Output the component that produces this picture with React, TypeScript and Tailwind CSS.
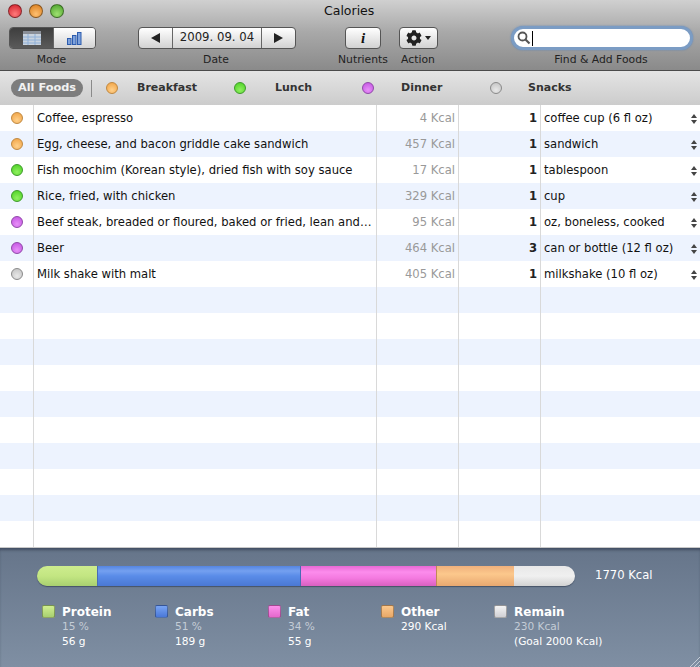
import { FaCog } from 'react-icons/fa'

const font = { fontFamily: '"DejaVu Sans", sans-serif' }

const dots: Record<string, string> = {
  orange: 'bg-[radial-gradient(circle_at_50%_70%,#ffd08a,#f0a040)] border-[#c08840]',
  green: 'bg-[radial-gradient(circle_at_50%_70%,#90f060,#48d020)] border-[#3d9a2a]',
  purple: 'bg-[radial-gradient(circle_at_50%_70%,#e890f8,#c050e0)] border-[#9048a8]',
  gray: 'bg-[radial-gradient(circle_at_50%_70%,#e8e8e8,#c0c0c0)] border-[#8a8a8a]',
}

const foods = [
  { dot: 'orange', name: 'Coffee, espresso', kcal: '4 Kcal', qty: '1', unit: 'coffee cup (6 fl oz)' },
  { dot: 'orange', name: 'Egg, cheese, and bacon griddle cake sandwich', kcal: '457 Kcal', qty: '1', unit: 'sandwich' },
  { dot: 'green', name: 'Fish moochim (Korean style), dried fish with soy sauce', kcal: '17 Kcal', qty: '1', unit: 'tablespoon' },
  { dot: 'green', name: 'Rice, fried, with chicken', kcal: '329 Kcal', qty: '1', unit: 'cup' },
  { dot: 'purple', name: 'Beef steak, breaded or floured, baked or fried, lean and…', kcal: '95 Kcal', qty: '1', unit: 'oz, boneless, cooked' },
  { dot: 'purple', name: 'Beer', kcal: '464 Kcal', qty: '3', unit: 'can or bottle (12 fl oz)' },
  { dot: 'gray', name: 'Milk shake with malt', kcal: '405 Kcal', qty: '1', unit: 'milkshake (10 fl oz)' },
]

const rows = Array.from({ length: 17 }, (_, i) => foods[i] ?? null)

const legend = [
  { title: 'Protein', a: '15 %', b: '56 g', w: 'w-[113px]', sw: 'bg-[linear-gradient(#d0ee90,#a8d070)]' },
  { title: 'Carbs', a: '51 %', b: '189 g', w: 'w-[113px]', sw: 'bg-[linear-gradient(#78a4f4,#4a78d8)]' },
  { title: 'Fat', a: '34 %', b: '55 g', w: 'w-[113px]', sw: 'bg-[linear-gradient(#fc90ec,#e468cc)]' },
  { title: 'Other', a: '290 Kcal', b: '', w: 'w-[113px]', sw: 'bg-[linear-gradient(#fcc88c,#e8a868)]' },
  { title: 'Remain', a: '230 Kcal', b: '(Goal 2000 Kcal)', w: 'w-[130px]', sw: 'bg-[linear-gradient(#f4f4f4,#d0d0d4)]' },
]

function Dot({ color }: { color: string }) {
  return <span className={`block h-[12px] w-[12px] rounded-full border ${dots[color]}`} />
}

function Light({ color }: { color: string }) {
  return <span className={`block h-[14px] w-[14px] rounded-full border border-black/40 ${color}`} />
}

function Label({ children, className = '' }: { children: string; className?: string }) {
  return <span className={`mt-[4px] text-[10.8px] leading-[14px] text-[#222] ${className}`}>{children}</span>
}

export default function App() {
  return (
    <div className="flex h-[667px] w-[700px] flex-col overflow-hidden bg-white" style={font}>
      {/* Title bar + toolbar */}
      <div className="h-[71px] shrink-0 border-b border-[#4a4a4a] bg-[linear-gradient(#d0d0d0,#a9a9a9_45%,#8a8a8a)]">
        <div className="flex h-[22px] items-center pl-[8px]">
          <div className="flex w-[64px] gap-[7px]">
            <Light color="bg-[radial-gradient(circle_at_50%_75%,#ff7a7a,#d01c28)]" />
            <Light color="bg-[radial-gradient(circle_at_50%_75%,#ffc070,#d87a18)]" />
            <Light color="bg-[radial-gradient(circle_at_50%_75%,#9ee070,#48a028)]" />
          </div>
          <span className="ml-[252px] text-[12.5px] leading-none text-[#111]">Calories</span>
        </div>
        <div className="flex items-start pl-[9px] pt-[5px]">
          {/* Mode */}
          <div className="flex w-[87px] flex-col items-center">
            <div className="flex h-[22px] w-[87px] overflow-hidden rounded-[4px] border border-[#555]">
              <div className="flex w-[43px] items-center justify-center bg-[linear-gradient(#3e3e3e,#5a5a5a)]">
                <svg width="18" height="14" viewBox="0 0 18 14">
                  <rect width="18" height="14" fill="#c9d3df" />
                  <rect y="0" width="18" height="3" fill="#8a8f98" />
                  <path d="M0 6h18M0 9h18M0 12h18M5 3v11M12 3v11" stroke="#8fb0d8" strokeWidth="1" />
                </svg>
              </div>
              <div className="flex flex-1 items-center justify-center border-l border-[#666] bg-[linear-gradient(#ffffff,#d4d4d4)]">
                <svg width="15" height="13" viewBox="0 0 15 13">
                  <rect x="0.5" y="6.5" width="3.5" height="6" fill="#7ea2dc" stroke="#2d5cae" />
                  <rect x="5.5" y="3.5" width="3.5" height="9" fill="#7ea2dc" stroke="#2d5cae" />
                  <rect x="10.5" y="0.5" width="3.5" height="12" fill="#7ea2dc" stroke="#2d5cae" />
                </svg>
              </div>
            </div>
            <Label className="-translate-x-[1px]">Mode</Label>
          </div>
          {/* Date */}
          <div className="ml-[42px] flex w-[158px] flex-col items-center">
            <div className="flex h-[22px] w-[158px] overflow-hidden rounded-[4px] border border-[#555] bg-[linear-gradient(#ffffff,#d2d2d2)]">
              <div className="flex w-[33px] items-center justify-center text-[#222]">
                <span className="h-0 w-0 border-y-[5px] border-r-[9px] border-y-transparent border-r-[#222]" />
              </div>
              <div className="flex flex-1 items-center justify-center border-x border-[#666] text-[11.7px] text-[#222]">2009. 09. 04</div>
              <div className="flex w-[33px] items-center justify-center">
                <span className="h-0 w-0 border-y-[5px] border-l-[9px] border-y-transparent border-l-[#222]" />
              </div>
            </div>
            <Label className="-translate-x-[1px]">Date</Label>
          </div>
          {/* Nutrients */}
          <div className="ml-[42px] flex w-[50px] flex-col items-center">
            <div className="flex h-[22px] w-[36px] items-center justify-center rounded-[4px] border border-[#555] bg-[linear-gradient(#ffffff,#d2d2d2)]">
              <span className="text-[15px] font-bold italic leading-none text-[#111]" style={{ fontFamily: '"Liberation Serif", serif' }}>i</span>
            </div>
            <Label>Nutrients</Label>
          </div>
          {/* Action */}
          <div className="ml-[10px] flex w-[40px] flex-col items-center">
            <div className="flex h-[22px] w-[39px] items-center justify-center gap-[3px] rounded-[4px] border border-[#555] bg-[linear-gradient(#ffffff,#d2d2d2)]">
              <FaCog size={16} className="text-[#222]" />
              <span className="h-0 w-0 border-x-[3.5px] border-t-[4px] border-x-transparent border-t-[#222]" />
            </div>
            <Label>Action</Label>
          </div>
          {/* Search */}
          <div className="ml-[73px] flex w-[182px] flex-col items-center">
            <div className="flex h-[24px] w-[182px] -translate-y-[1px] items-center rounded-full border-[3px] border-[#7b9cc4] bg-white pl-[3px] shadow-[0_0_2px_#5f86b8]">
              <svg width="14" height="14" viewBox="0 0 14 14" fill="none">
                <circle cx="5.5" cy="5.5" r="4" stroke="#555" strokeWidth="1.8" />
                <path d="M8.5 8.5l4 4" stroke="#555" strokeWidth="2.2" />
              </svg>
              <span className="ml-[1px] h-[15px] w-px bg-black" />
            </div>
            <Label className="-translate-x-[1px] -translate-y-[2px]">Find &amp; Add Foods</Label>
          </div>
        </div>
      </div>

      {/* Filter bar */}
      <div className="flex h-[34px] shrink-0 items-center bg-[linear-gradient(#e4e4e4,#cccccc)] pl-[11px] text-[11px] font-bold text-[#333]">
        <span className="flex h-[18px] w-[72px] items-center justify-center rounded-full bg-[#7d7d7d] text-[11.3px] text-white/90">All Foods</span>
        <span className="ml-[8px] h-[17px] w-px bg-[#8a8a8a]" />
        <span className="ml-[14px]"><Dot color="orange" /></span>
        <span className="ml-[19px] w-[97px]">Breakfast</span>
        <Dot color="green" />
        <span className="ml-[29px] w-[87px]">Lunch</span>
        <Dot color="purple" />
        <span className="ml-[27px] w-[89px]">Dinner</span>
        <Dot color="gray" />
        <span className="ml-[26px]">Snacks</span>
      </div>

      {/* Table */}
      <div className="flex h-[442px] shrink-0 flex-col">
        {rows.map((row, i) => (
          <div key={i} className={`flex h-[26px] shrink-0 items-center text-[11.6px] ${i % 2 ? 'bg-[#edf3fe]' : 'bg-white'}`}>
            <div className="flex h-full w-[34px] items-center border-r border-[#d9d9d9] pl-[11px]">
              {row && <Dot color={row.dot} />}
            </div>
            <div className="flex h-full w-[343px] items-center overflow-hidden whitespace-nowrap border-r border-[#d9d9d9] pl-[3px] pt-[1px] text-[#111]">{row?.name}</div>
            <div className="flex h-full w-[82px] items-center justify-end border-r border-[#d9d9d9] pr-[3px] pt-[1px] text-[#999]">{row?.kcal}</div>
            <div className="flex h-full w-[82px] items-center justify-end border-r border-[#d9d9d9] pr-[3px] pt-[1px] font-bold text-[#222]">{row?.qty}</div>
            <div className="flex h-full flex-1 items-center justify-between pl-[3px] pr-[3px] pt-[1px] text-[#111]">
              <span>{row?.unit}</span>
              {row && (
                <span className="flex flex-col gap-[2px]">
                  <span className="h-0 w-0 border-x-[3px] border-b-[4px] border-x-transparent border-b-[#444]" />
                  <span className="h-0 w-0 border-x-[3px] border-t-[4px] border-x-transparent border-t-[#444]" />
                </span>
              )}
            </div>
          </div>
        ))}
      </div>

      {/* Summary */}
      <div className="relative flex-1 border-t border-[#c8c8c8] bg-[linear-gradient(#66758a,#7f8fa3)] pl-[37px] pt-[18px] shadow-[inset_0_3px_3px_-1px_rgba(40,50,70,0.6)]">
        <div className="flex items-center">
          <div className="flex h-[20px] w-[538px] overflow-hidden rounded-full shadow-[0_1px_1px_rgba(30,40,60,0.5)]">
            <div className="w-[60px] bg-[linear-gradient(#cdec8e_0%,#c3e682_50%,#a8d070)]" />
            <div className="w-[204px] border-x border-[#4a6cb4] bg-[linear-gradient(#5585e0_0%,#74a0f0_25%,#5a8ce8_50%,#4a78d4)]" />
            <div className="w-[135px] bg-[linear-gradient(#e868d4_0%,#fc8cec_30%,#f47ae0_60%,#d860c0)]" />
            <div className="w-[78px] border-l border-[#c08858] bg-[linear-gradient(#f0b07c_0%,#fcc88c_40%,#e8a870)]" />
            <div className="flex-1 bg-[linear-gradient(#e8e8e8,#f0f0f0_50%,#d2d2d2)]" />
          </div>
          <span className="ml-[20px] text-[11.6px] text-white">1770 Kcal</span>
        </div>
        <div className="ml-[5px] mt-[19px] flex">
          {legend.map(item => (
            <div key={item.title} className={`flex ${item.w}`}>
              <span className={`h-[13px] w-[13px] rounded-[2px] border border-black/30 ${item.sw}`} />
              <div className="ml-[7px] flex flex-col text-[10.6px] leading-[14.5px]">
                <span className="text-[12px] font-bold leading-[14px] text-white">{item.title}</span>
                <span className={item.title === 'Other' ? 'text-white' : 'text-[#c4ccd6]'}>{item.a}</span>
                <span className="text-white">{item.b}</span>
              </div>
            </div>
          ))}
        </div>
        <svg className="absolute bottom-0 right-0" width="12" height="12" viewBox="0 0 12 12">
          <path d="M2 12L12 2M6 12l6-6M10 12l2-2" stroke="#c5ccd6" strokeWidth="1" />
        </svg>
      </div>
    </div>
  )
}
